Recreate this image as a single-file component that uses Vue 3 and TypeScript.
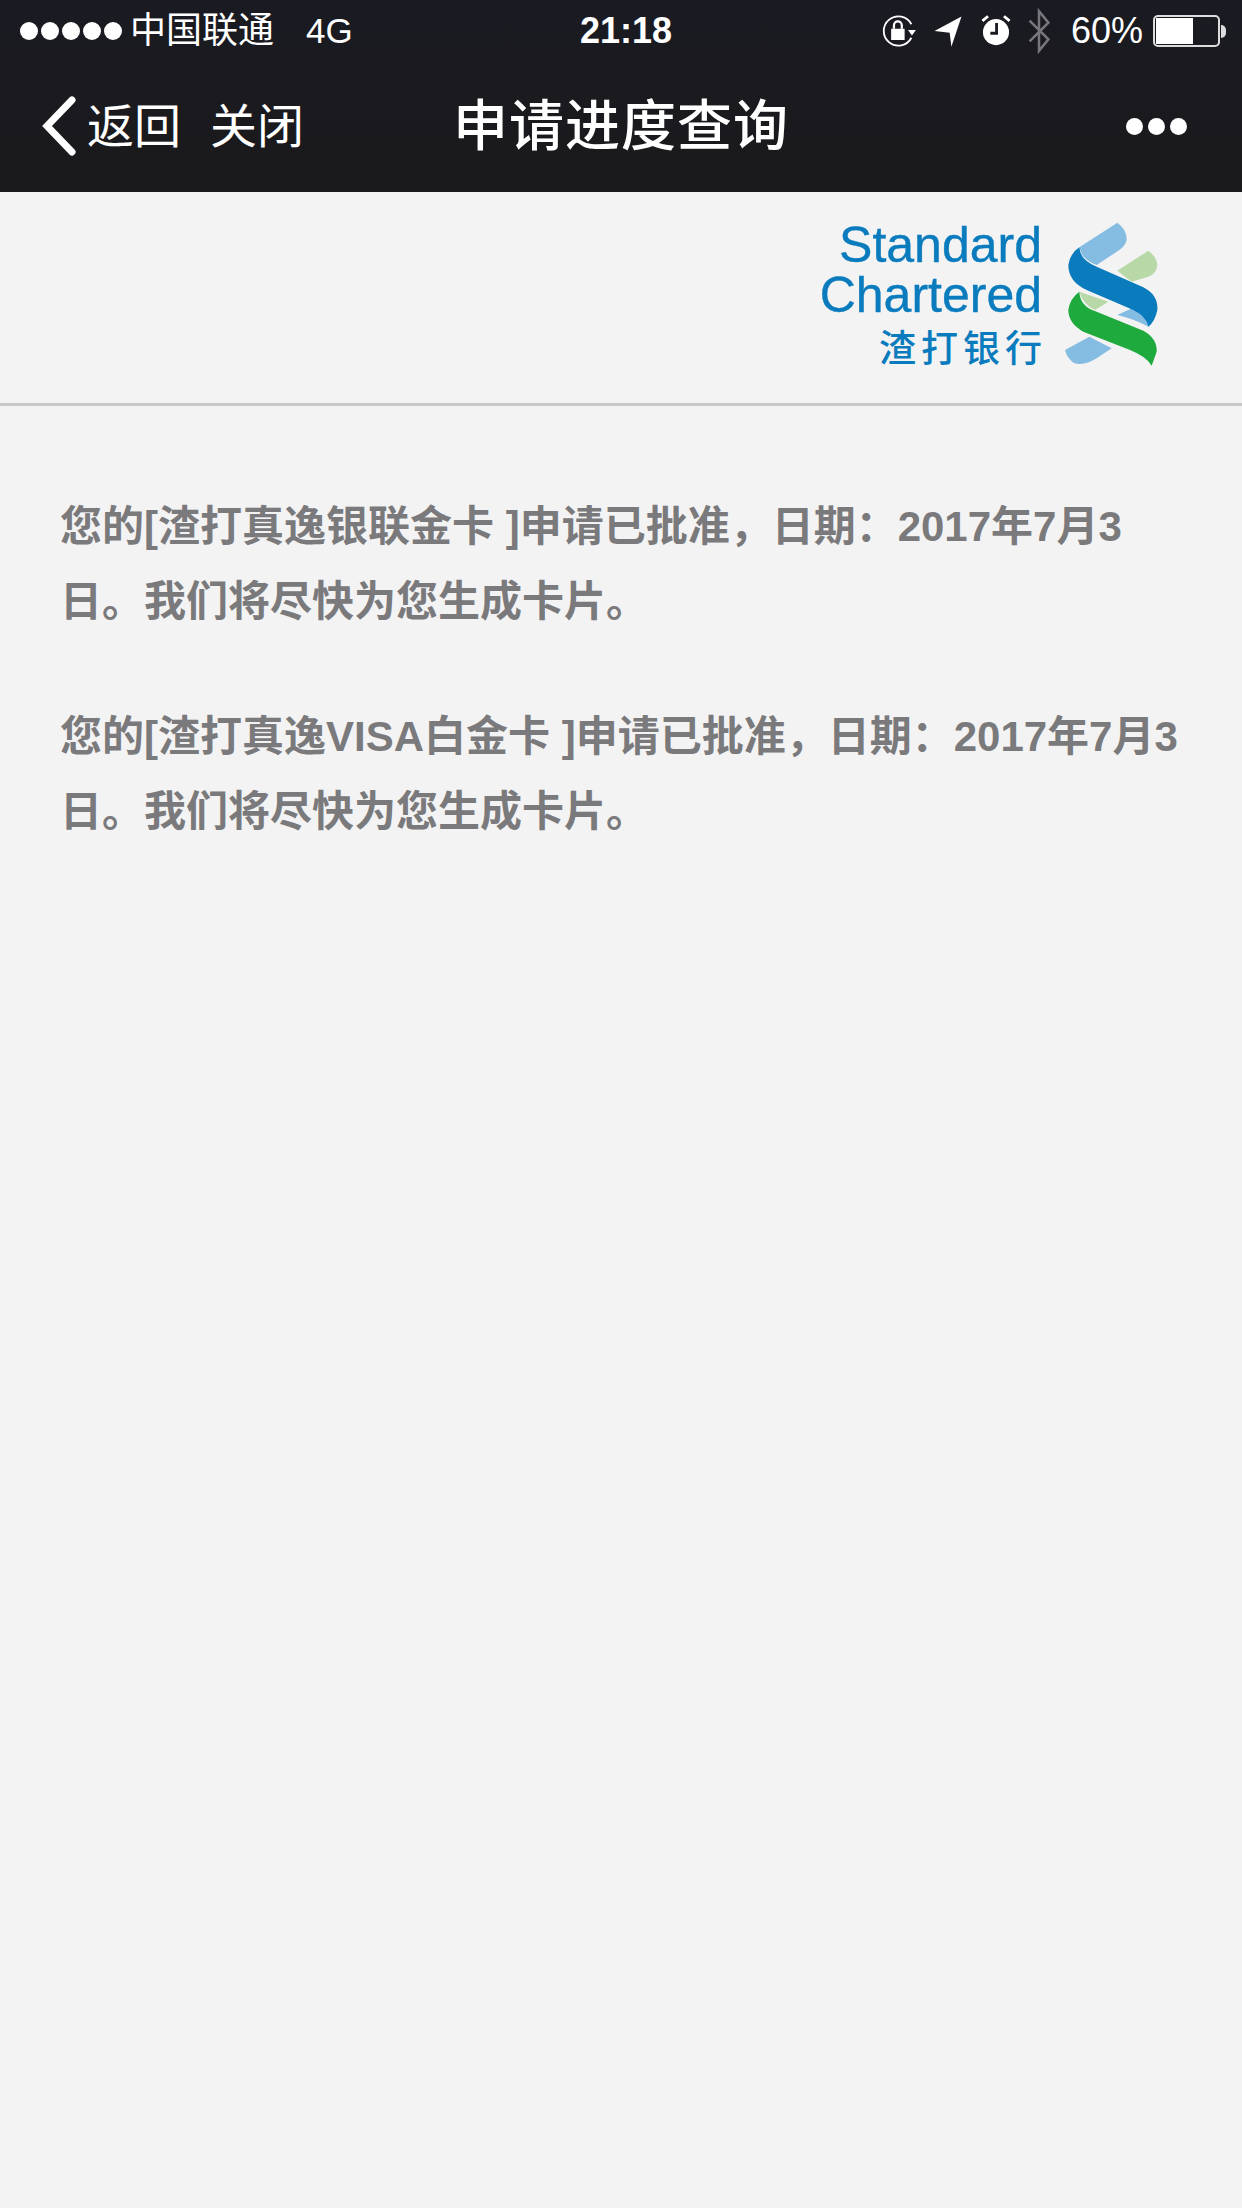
<script setup lang="ts">
// full-width comma and colon, written as escapes so they stay full-width
const comma = '\uFF0C'
const colon = '\uFF1A'
const tail = `申请已批准${comma}日期${colon}2017年7月3日。我们将尽快为您生成卡片。`
const messages: string[] = [`您的[渣打真逸银联金卡 ]${tail}`, `您的[渣打真逸VISA白金卡 ]${tail}`]
</script>

<template>
  <div class="page">
    <div class="top">
      <div class="status">
        <div class="status-left">
          <div class="signal"><i v-for="n in 5" :key="n"></i></div>
          <span class="carrier">中国联通</span>
          <span class="net">4G</span>
        </div>
        <div class="time">21:18</div>
        <div class="status-right">
          <svg class="ic" width="34" height="36" viewBox="0 0 30 32">
            <path d="M26 22A13 13 0 1 1 26 10" fill="none" stroke="#fff" stroke-width="1.6" />
            <path d="M23 15h7l-3.500 5z" fill="#fff" />
            <rect x="8" y="14" width="12" height="10" fill="#fff" />
            <path d="M10.500 14v-3a3.500 3.500 0 0 1 7 0v3" fill="none" stroke="#fff" stroke-width="2" />
          </svg>
          <svg class="ic ic-loc" width="30" height="36" viewBox="0 0 26 32">
            <path d="M1 16L25 3L16 30L14.500 17.500z" fill="#fff" />
          </svg>
          <svg class="ic ic-alarm" width="30" height="34" viewBox="0 0 26 30">
            <circle cx="13" cy="16" r="11.500" fill="#fff" />
            <path d="M1 6l5-4M25 6l-5-4" stroke="#fff" stroke-width="2.500" />
            <path d="M13.500 8v9H8" fill="none" stroke="#1a1a21" stroke-width="2.500" />
          </svg>
          <svg class="ic ic-bt" width="28" height="46" viewBox="0 0 22 44">
            <path d="M2 12L20 30L11 41V3L20 14L2 32" fill="none" stroke="#77777c" stroke-width="2.400" />
          </svg>
          <span class="pct">60%</span>
          <div class="battery"><div class="level" :style="{ width: '60%' }"></div></div>
          <div class="nub"></div>
        </div>
      </div>
      <div class="nav">
        <div class="nav-left">
          <svg class="back" width="36" height="60" viewBox="0 0 36 60">
            <path d="M31 4L6 30L31 56" fill="none" stroke="#fff" stroke-width="7" stroke-linecap="round" />
          </svg>
          <span>返回</span>
          <span class="close">关闭</span>
        </div>
        <div class="title">申请进度查询</div>
        <div class="more"><i></i><i></i><i></i></div>
      </div>
    </div>

    <div class="brand">
      <div class="brand-text">
        <div class="brand-en">Standard</div>
        <div class="brand-en">Chartered</div>
        <div class="brand-cn">渣打银行</div>
      </div>
      <svg class="brand-mark" width="130" height="170" viewBox="0 0 390 510">
        <path d="M118 112L232 38Q262 60 260 90Q255 110 235 122L170 165Q125 150 118 112Z" fill="#85bce2" />
        <path d="M232 182L325 122Q350 140 352 165Q350 190 325 200L275 215Z" fill="#b9d8a8" />
        <path d="M118 245L205 275L165 300Q130 285 118 245Z" fill="#b9d8a8" />
        <path d="M232 315L282 292L322 318L325 350Q290 330 232 315Z" fill="#85bce2" />
        <path d="M75 420L148 380L215 415L170 445Q130 470 100 458Q80 442 75 420Z" fill="#85bce2" />
        <path d="M118 112Q120 150 170 170L310 232Q355 255 352 300Q345 335 325 350Q320 320 280 300L140 240Q85 215 85 165Q90 130 118 112Z" fill="#0a7bbd" />
        <path d="M118 245Q120 290 170 305L310 362Q352 385 350 425L335 467Q320 440 270 420L130 365Q85 340 85 300Q90 265 118 245Z" fill="#1eaa3c" />
      </svg>
    </div>

    <div class="content">
      <p v-for="(msg, i) in messages" :key="i">{{ msg }}</p>
    </div>
  </div>
</template>

<style scoped>
.page {
  width: 1242px;
  height: 2208px;
  overflow: hidden;
  background: #f3f3f4;
  font-family: "Liberation Sans", "Noto Sans CJK SC", sans-serif;
}
.top {
  height: 192px;
  background: linear-gradient(#1a1a22, #1a1a1c);
  color: #fff;
}
.status {
  height: 62px;
  padding-left: 10px;
  display: grid;
  grid-template-columns: 1fr auto 1fr;
  align-items: center;
}
.status-left {
  display: flex;
  align-items: center;
  padding-left: 10px;
}
.signal {
  display: flex;
  gap: 3px;
}
.signal i {
  width: 18px;
  height: 18px;
  border-radius: 50%;
  background: #fff;
}
.carrier {
  margin-left: 8px;
  font-size: 36px;
  line-height: 44px;
}
.net {
  margin-left: 32px;
  font-size: 35px;
}
.time {
  font-size: 36px;
  font-weight: 700;
}
.status-right {
  display: flex;
  align-items: center;
  justify-content: flex-end;
  padding-right: 16px;
}
.ic {
  display: block;
}
.ic-loc {
  margin-left: 17px;
}
.ic-alarm {
  margin-left: 18px;
}
.ic-bt {
  margin-left: 14px;
}
.pct {
  margin-left: 18px;
  font-size: 36px;
}
.battery {
  margin-left: 10px;
  width: 67px;
  height: 32px;
  box-sizing: border-box;
  border: 2px solid #ddd;
  border-radius: 5px;
  padding: 1px;
}
.level {
  height: 100%;
  background: #fff;
}
.nub {
  width: 5px;
  height: 13px;
  margin-left: 1px;
  background: #ddd;
  border-radius: 0 6px 6px 0;
}
.nav {
  height: 130px;
  box-sizing: border-box;
  padding-bottom: 2px;
  display: grid;
  grid-template-columns: 1fr auto 1fr;
  align-items: center;
}
.nav-left {
  display: flex;
  align-items: center;
  padding-left: 41px;
  font-size: 47px;
  line-height: 60px;
}
.nav-left span {
  padding-top: 2px;
}
.back {
  margin-right: 10px;
}
.close {
  margin-left: 29px;
}
.title {
  font-size: 55px;
  line-height: 70px;
  font-weight: 500;
  letter-spacing: 1px;
}
.more {
  display: flex;
  justify-content: flex-end;
  gap: 5px;
  padding-right: 55px;
}
.more i {
  width: 17px;
  height: 17px;
  border-radius: 50%;
  background: #fff;
}
.brand {
  height: 214px;
  box-sizing: border-box;
  border-bottom: 3px solid #c9c9cb;
  display: flex;
  justify-content: flex-end;
  align-items: flex-start;
  padding: 28px 72px 0 0;
  color: #0a7bbd;
}
.brand-text {
  text-align: right;
}
.brand-en {
  font-size: 50px;
  line-height: 50px;
  -webkit-text-stroke: 0.4px #0a7bbd;
}
.brand-cn {
  margin-top: 8px;
  margin-right: -5px;
  font-size: 37px;
  line-height: 44px;
  font-weight: 500;
  letter-spacing: 5px;
}
.brand-mark {
  margin-left: -2px;
  margin-top: -10px;
}
.content {
  padding: 83px 60px 0 60px;
  color: #7a7a7c;
  font-size: 42px;
  font-weight: 700;
  line-height: 75px;
}
.content p {
  margin: 0 0 60px;
}
</style>
